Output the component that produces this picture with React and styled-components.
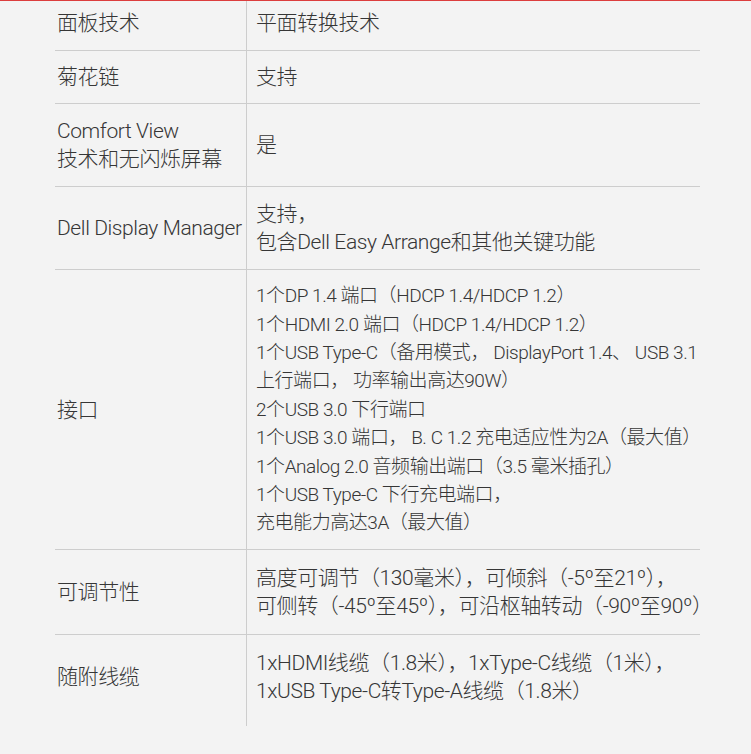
import React from "react";
import styled, { createGlobalStyle } from "styled-components";

const GlobalStyle = createGlobalStyle`
  html, body {
    margin: 0;
    padding: 0;
    background: #f3f3f3;
  }
  body {
    font-family: Roboto, "Noto Sans CJK SC", sans-serif;
  }
`;

const Page = styled.div`
  min-height: 754px;
  background: #f3f3f3;
  border-top: 1px solid #dc3d3d;
  box-sizing: border-box;
`;

const Table = styled.div`
  margin-left: 55px;
  width: 645px;
  color: #363636;
  font-size: 21px;
  font-weight: 300;
  letter-spacing: -0.4px;
  line-height: 28.4px;
`;

const Row = styled.div`
  display: grid;
  grid-template-columns: 192px 1fr;
  border-bottom: 1px solid #cdcdcd;
  &:last-child {
    border-bottom: none;
  }
`;

const Label = styled.div`
  display: flex;
  flex-direction: column;
  justify-content: center;
  padding: ${(p) => p.$pt}px 0 ${(p) => p.$pb}px 2px;
  border-right: 1px solid #cdcdcd;
`;

const Value = styled.div`
  display: flex;
  flex-direction: column;
  justify-content: center;
  padding: ${(p) => p.$pt}px 0 ${(p) => p.$pb}px 9px;
  font-size: ${(p) => (p.$compact ? "19px" : "21px")};
  letter-spacing: ${(p) => (p.$compact ? "-0.45px" : "-0.4px")};
`;

const Line = styled.div`
  white-space: nowrap;
`;

const rows = [
  { label: ["面板技术"], value: ["平面转换技术"], pt: 8, pb: 13 },
  { label: ["菊花链"], value: ["支持"], pt: 11.8, pb: 11.8 },
  { label: ["Comfort View", "技术和无闪烁屏幕"], value: ["是"], pt: 12.6, pb: 12.6 },
  {
    label: ["Dell Display Manager"],
    value: ["支持，", "包含Dell Easy Arrange和其他关键功能"],
    pt: 12.6,
    pb: 12.6,
  },
  {
    label: ["接口"],
    value: [
      "1个DP 1.4 端口（HDCP 1.4/HDCP 1.2）",
      "1个HDMI 2.0 端口（HDCP 1.4/HDCP 1.2）",
      "1个USB Type-C（备用模式， DisplayPort 1.4、 USB 3.1",
      "上行端口， 功率输出高达90W）",
      "2个USB 3.0 下行端口",
      "1个USB 3.0 端口， B. C 1.2 充电适应性为2A（最大值）",
      "1个Analog 2.0 音频输出端口（3.5 毫米插孔）",
      "1个USB Type-C 下行充电端口，",
      "充电能力高达3A（最大值）",
    ],
    pt: 11.7,
    pb: 11.7,
    compact: true,
  },
  {
    label: ["可调节性"],
    value: [
      "高度可调节（130毫米），可倾斜（-5º至21º），",
      "可侧转（-45º至45º），可沿枢轴转动（-90º至90º）",
    ],
    pt: 13.6,
    pb: 13.6,
  },
  {
    label: ["随附线缆"],
    value: [
      "1xHDMI线缆（1.8米），1xType-C线缆（1米），",
      "1xUSB Type-C转Type-A线缆（1.8米）",
    ],
    pt: 13.6,
    pb: 20,
  },
];

export default function App() {
  return (
    <>
      <GlobalStyle />
      <Page>
        <Table>
          {rows.map((r, i) => (
            <Row key={i}>
              <Label $pt={r.pt} $pb={r.pb}>
                {r.label.map((t, j) => (
                  <Line key={j}>{t}</Line>
                ))}
              </Label>
              <Value $pt={r.pt} $pb={r.pb} $compact={r.compact}>
                {r.value.map((t, j) => (
                  <Line key={j}>{t}</Line>
                ))}
              </Value>
            </Row>
          ))}
        </Table>
      </Page>
    </>
  );
}
